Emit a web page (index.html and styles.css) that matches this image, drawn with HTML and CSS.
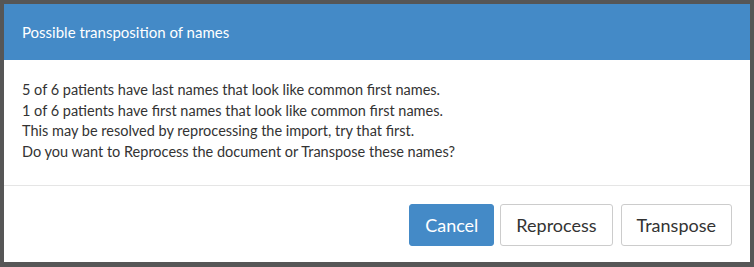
FILE: index.html
```html
<!DOCTYPE html>
<html lang="en">
<head>
    <meta charset="UTF-8">
    <title>Possible transposition of names</title>
    <link rel="stylesheet" href="styles.css">
</head>
<body>
    <div class="modal">
        <div class="modal-header">
            <h4>Possible transposition of names</h4>
        </div>
        <div class="modal-body">
            <p>5 of 6 patients have last names that look like common first names.</p>
            <p>1 of 6 patients have first names that look like common first names.</p>
            <p>This may be resolved by reprocessing the import, try that first.</p>
            <p>Do you want to Reprocess the document or Transpose these names?</p>
        </div>
        <div class="modal-footer">
            <button class="btn btn-primary">Cancel</button>
            <button class="btn">Reprocess</button>
            <button class="btn">Transpose</button>
        </div>
    </div>
</body>
</html>
```

FILE: styles.css
```css
body {
    margin: 0;
    padding: 4px 4px 5px 4px;
    background: #565656;
    font-family: Lato, 'Open Sans', sans-serif;
    color: #333;
}

.modal {
    background: white;
    width: 746px;
    height: 258px;
    display: flex;
    flex-direction: column;
}

.modal-header {
    background: #448ac7;
    height: 56px;
    padding: 0 18px;
    display: flex;
    align-items: center;
}

.modal-header h4 {
    margin: 0;
    color: white;
    font-size: 15px;
    font-weight: normal;
}

.modal-body {
    padding: 20px 18px 23px 18px;
    border-bottom: 1px solid #e5e5e5;
}

.modal-body p {
    margin: 0;
    font-size: 14.5px;
    line-height: 20.5px;
}

.modal-footer {
    flex: 1;
    display: flex;
    justify-content: flex-end;
    align-items: flex-start;
    padding: 18px 18px 0 0;
}

.btn {
    height: 42px;
    padding: 0 15px;
    margin-left: 8px;
    font-family: inherit;
    font-size: 18px;
    color: #333;
    background: white;
    border: 1px solid #ccc;
    border-radius: 3px;
}

.btn-primary {
    background: #448ac7;
    border-color: #448ac7;
    color: white;
    margin-right: -2px;
}
```
